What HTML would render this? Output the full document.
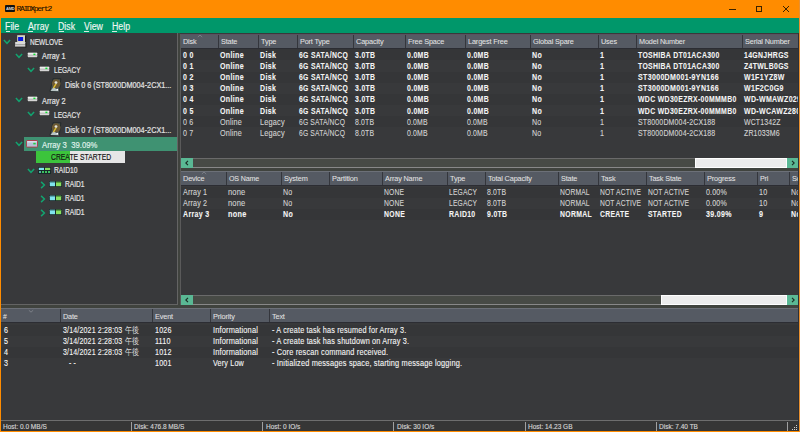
<!DOCTYPE html><html><head><meta charset="utf-8"><style>
*{margin:0;padding:0;box-sizing:border-box}
html,body{width:800px;height:432px;overflow:hidden;background:#ff8c00}
body{position:relative;font-family:"Liberation Sans",sans-serif;}
.a{position:absolute;white-space:nowrap}
.title{left:0;top:0;width:800px;height:18px;background:#ff8c00}
.menu{left:1px;top:18px;width:798px;height:15px;background:#00976a;color:#eef6f2;font-size:10px;-webkit-text-stroke:0.15px currentColor}
.menu span{position:absolute;top:3.4px;line-height:11px}
.menu u{text-decoration:underline;text-underline-offset:1px;text-decoration-thickness:1px}
.pan{background:#38393b}
.gap{background:#40433e}
.hdr{position:absolute;height:15px;background:#555a63;border-top:1px solid #6c7078;border-bottom:1px solid #2c2d33;color:#e2e2e2;font-size:7.5px;letter-spacing:-0.15px;-webkit-text-stroke:0.05px currentColor}
.hc{position:absolute;top:0;height:13px;line-height:13px;padding-left:1.6px;border-left:1px solid #34363c}
.t{position:absolute;font-size:9px;line-height:11px;color:#f4f4f4;white-space:nowrap;-webkit-text-stroke:0.12px currentColor;letter-spacing:0.2px;transform:scaleX(0.88);transform-origin:0 0}
.b{font-weight:bold;-webkit-text-stroke:0.1px currentColor;letter-spacing:0.45px;font-size:9.5px}
.g{color:#d2d2d2}
.tt{position:absolute;font-size:8.5px;line-height:14px;color:#f2f2f2;white-space:nowrap;-webkit-text-stroke:0.2px currentColor;transform:scaleX(0.87);transform-origin:0 0}
.sb{position:absolute;height:10px;background:#474a45;border-top:1px solid #6a6a6a;border-bottom:1px solid #888}
.btn{position:absolute;top:-1px;width:12px;height:10px;background:#5ab894}
.status{left:1px;top:420px;width:798px;height:11px;background:#363636;border-top:1px solid #6e6e6e;font-size:7px;color:#d4d4d4}
.status span{position:absolute;top:1px;line-height:10px;transform:scaleX(0.93);transform-origin:0 0;-webkit-text-stroke:0.15px currentColor}
.status i{position:absolute;top:1px;width:1px;height:9px;background:#a0a0a0}
</style></head><body>
<div class="a title">
<div class="a" style="left:5px;top:5px;width:10px;height:7px;background:#111;border-radius:1px"></div>
<div class="a" style="left:6px;top:6px;font:bold 4px/5px 'Liberation Sans',sans-serif;color:#ddd;letter-spacing:-0.2px">AMD</div>
<div class="a" style="left:16.5px;top:4.1px;font:8px/10px 'Liberation Mono',monospace;color:#1a1000;letter-spacing:-1.35px;-webkit-text-stroke:0.1px #1a1000">RAIDXpert2</div>
<div class="a" style="left:729px;top:9px;width:7px;height:1px;background:#3a2200"></div>
<div class="a" style="left:756px;top:6px;width:6px;height:6px;border:1px solid #3a2200"></div>
<svg class="a" style="left:782px;top:5px" width="8" height="8" viewBox="0 0 8 8"><path d="M1 1L7 7M7 1L1 7" stroke="#3a2200" stroke-width="1"/></svg>
</div>
<div class="a menu">
<span style="left:4.0px;transform:scaleX(0.88);transform-origin:0 0">File</span>
<div class="a" style="left:4.7px;top:12.6px;width:4px;height:1px;background:#d8ece2"></div>
<span style="left:26.5px;transform:scaleX(0.88);transform-origin:0 0">Array</span>
<div class="a" style="left:27.2px;top:12.6px;width:5px;height:1px;background:#d8ece2"></div>
<span style="left:56.8px;transform:scaleX(0.88);transform-origin:0 0">Disk</span>
<div class="a" style="left:57.5px;top:12.6px;width:5px;height:1px;background:#d8ece2"></div>
<span style="left:82.5px;transform:scaleX(0.88);transform-origin:0 0">View</span>
<div class="a" style="left:83.2px;top:12.6px;width:5px;height:1px;background:#d8ece2"></div>
<span style="left:110.5px;transform:scaleX(0.88);transform-origin:0 0">Help</span>
<div class="a" style="left:111.2px;top:12.6px;width:5px;height:1px;background:#d8ece2"></div>
</div>
<div class="a pan" style="left:1px;top:33px;width:798px;height:387px"></div>
<div class="a" style="left:177px;top:33px;width:1px;height:272px;background:#646464"></div>
<div class="a" style="left:1px;top:304px;width:177px;height:1px;background:#646464"></div>
<div class="a gap" style="left:178px;top:33px;width:2px;height:275px"></div>
<div class="a" style="left:180px;top:34px;width:1px;height:271px;background:#5a5a5a"></div>
<div class="a gap" style="left:1px;top:305px;width:798px;height:3px"></div>
<div class="a gap" style="left:181px;top:168px;width:618px;height:3px"></div>
<svg class="a" style="left:3px;top:38.5px" width="8" height="6" viewBox="0 0 8 6"><path d="M0.9 1.1L4 4.3L7.1 1.1" fill="none" stroke="#12a470" stroke-width="1.5"/></svg>
<svg class="a" style="left:14px;top:35px" width="13" height="13" viewBox="0 0 13 13"><rect x="3.2" y="0.2" width="8" height="6.8" fill="#d4d4c0"/><rect x="11.1" y="0.6" width="1.1" height="6.6" fill="#151515"/><rect x="4.1" y="2" width="5" height="4" fill="#0818e0"/><path d="M1.2 7H11.6L12 12H1Z" fill="#dadada"/><rect x="1" y="9.2" width="11" height="1" fill="#9a9a9a"/><rect x="11.4" y="7.5" width="1" height="5" fill="#151515"/><rect x="1" y="11.6" width="11" height="0.8" fill="#202020"/></svg>
<div class="tt" style="left:30px;top:35.0px;color:#e2e2e2;transform:scaleX(0.770)">NEWLOVE</div>
<svg class="a" style="left:15px;top:52.5px" width="8" height="6" viewBox="0 0 8 6"><path d="M0.9 1.1L4 4.3L7.1 1.1" fill="none" stroke="#12a470" stroke-width="1.5"/></svg>
<svg class="a" style="left:27px;top:52px" width="11" height="6" viewBox="0 0 11 6"><rect x="0.3" y="0.3" width="10.4" height="5.4" fill="#d6d6d6" stroke="#262626" stroke-width="0.6"/><rect x="0.8" y="0.8" width="9.4" height="1" fill="#f4f4f4"/><rect x="0.8" y="3" width="9.4" height="0.8" fill="#bcbcbc"/><rect x="6.4" y="1.6" width="2" height="1.5" fill="#10e030"/></svg>
<div class="tt" style="left:42px;top:49.0px;color:#e2e2e2;transform:scaleX(0.862)">Array 1</div>
<svg class="a" style="left:27px;top:66.5px" width="8" height="6" viewBox="0 0 8 6"><path d="M0.9 1.1L4 4.3L7.1 1.1" fill="none" stroke="#12a470" stroke-width="1.5"/></svg>
<svg class="a" style="left:39px;top:66px" width="11" height="6" viewBox="0 0 11 6"><rect x="0.3" y="0.3" width="10.4" height="5.4" fill="#d6d6d6" stroke="#262626" stroke-width="0.6"/><rect x="0.8" y="0.8" width="9.4" height="1" fill="#f4f4f4"/><rect x="0.8" y="3" width="9.4" height="0.8" fill="#bcbcbc"/><rect x="6.4" y="1.6" width="2" height="1.5" fill="#10e030"/></svg>
<div class="tt" style="left:54px;top:63.0px;color:#e2e2e2;transform:scaleX(0.770)">LEGACY</div>
<svg class="a" style="left:49px;top:78px" width="13" height="14" viewBox="0 0 13 14"><path d="M4 0.8H11.8L10.2 13.4H1Z" fill="#4a5252" stroke="#141c1c" stroke-width="0.6"/><path d="M1.5 13L4.5 9L10.2 13.2Z" fill="#b8c4c4"/><circle cx="7.2" cy="5.6" r="4.3" fill="#6e5a32"/><circle cx="7" cy="4.6" r="1.4" fill="#e4e2d8"/><path d="M7 5.8L4.4 10.2" stroke="#e0c030" stroke-width="1.3"/><circle cx="8.3" cy="11.6" r="0.9" fill="#fff"/></svg>
<div class="tt" style="left:65px;top:78.0px;color:#e2e2e2;transform:scaleX(0.856)">Disk 0 6 (ST8000DM004-2CX1...</div>
<svg class="a" style="left:15px;top:96.5px" width="8" height="6" viewBox="0 0 8 6"><path d="M0.9 1.1L4 4.3L7.1 1.1" fill="none" stroke="#12a470" stroke-width="1.5"/></svg>
<svg class="a" style="left:27px;top:96px" width="11" height="6" viewBox="0 0 11 6"><rect x="0.3" y="0.3" width="10.4" height="5.4" fill="#d6d6d6" stroke="#262626" stroke-width="0.6"/><rect x="0.8" y="0.8" width="9.4" height="1" fill="#f4f4f4"/><rect x="0.8" y="3" width="9.4" height="0.8" fill="#bcbcbc"/><rect x="6.4" y="1.6" width="2" height="1.5" fill="#10e030"/></svg>
<div class="tt" style="left:42px;top:93.5px;color:#e2e2e2;transform:scaleX(0.862)">Array 2</div>
<svg class="a" style="left:27px;top:110.5px" width="8" height="6" viewBox="0 0 8 6"><path d="M0.9 1.1L4 4.3L7.1 1.1" fill="none" stroke="#12a470" stroke-width="1.5"/></svg>
<svg class="a" style="left:39px;top:110px" width="11" height="6" viewBox="0 0 11 6"><rect x="0.3" y="0.3" width="10.4" height="5.4" fill="#d6d6d6" stroke="#262626" stroke-width="0.6"/><rect x="0.8" y="0.8" width="9.4" height="1" fill="#f4f4f4"/><rect x="0.8" y="3" width="9.4" height="0.8" fill="#bcbcbc"/><rect x="6.4" y="1.6" width="2" height="1.5" fill="#10e030"/></svg>
<div class="tt" style="left:54px;top:107.5px;color:#e2e2e2;transform:scaleX(0.770)">LEGACY</div>
<svg class="a" style="left:49px;top:122px" width="13" height="14" viewBox="0 0 13 14"><path d="M4 0.8H11.8L10.2 13.4H1Z" fill="#4a5252" stroke="#141c1c" stroke-width="0.6"/><path d="M1.5 13L4.5 9L10.2 13.2Z" fill="#b8c4c4"/><circle cx="7.2" cy="5.6" r="4.3" fill="#6e5a32"/><circle cx="7" cy="4.6" r="1.4" fill="#e4e2d8"/><path d="M7 5.8L4.4 10.2" stroke="#e0c030" stroke-width="1.3"/><circle cx="8.3" cy="11.6" r="0.9" fill="#fff"/></svg>
<div class="tt" style="left:65px;top:123.0px;color:#e2e2e2;transform:scaleX(0.856)">Disk 0 7 (ST8000DM004-2CX1...</div>
<div class="a" style="left:24px;top:137px;width:153px;height:14px;background:#3f9272"></div>
<svg class="a" style="left:15px;top:140.5px" width="8" height="6" viewBox="0 0 8 6"><path d="M0.9 1.1L4 4.3L7.1 1.1" fill="none" stroke="#12a470" stroke-width="1.5"/></svg>
<svg class="a" style="left:26px;top:140px" width="12" height="8" viewBox="0 0 12 8"><rect x="0.5" y="0.5" width="11" height="6.6" rx="0.6" fill="#b4c2d6" stroke="#b03848" stroke-width="0.9"/><rect x="1.3" y="1.2" width="9.4" height="1.2" fill="#e0e8f0"/><rect x="7.3" y="2.8" width="2.4" height="1.6" fill="#20d040"/></svg>
<div class="tt" style="left:42px;top:137.9px;color:#dff0e8;transform:scaleX(0.909)">Array 3&nbsp; 39.09%</div>
<div class="a" style="left:36px;top:151px;width:89px;height:12px;background:#e6e6e6;overflow:hidden"><div class="a" style="left:0;top:0;width:34px;height:12px;background:#3cc43c"></div><div class="a" style="left:14.5px;top:0;font-size:8.5px;line-height:12.5px;color:#111;transform:scaleX(0.80);transform-origin:0 0;-webkit-text-stroke:0.15px #111">CREATE STARTED</div></div>
<svg class="a" style="left:27px;top:167.5px" width="8" height="6" viewBox="0 0 8 6"><path d="M0.9 1.1L4 4.3L7.1 1.1" fill="none" stroke="#12a470" stroke-width="1.5"/></svg>
<svg class="a" style="left:38px;top:167px" width="13" height="7" viewBox="0 0 13 7"><rect x="0" y="0" width="13" height="7" fill="#18282a"/><rect x="0.8" y="0.8" width="5.2" height="2.2" fill="#80e4ee"/><rect x="7" y="0.8" width="5.2" height="2.2" fill="#88e060"/><rect x="1" y="4" width="2" height="2" fill="#50b0a0"/><rect x="4" y="4" width="2" height="2" fill="#40c060"/><rect x="7" y="4" width="2" height="2" fill="#40c060"/><rect x="10" y="4" width="2" height="2" fill="#40c060"/></svg>
<div class="tt" style="left:53.6px;top:163.0px;color:#e2e2e2;transform:scaleX(0.789)">RAID10</div>
<svg class="a" style="left:40px;top:180.5px" width="6" height="8" viewBox="0 0 6 8"><path d="M1.1 0.9L4.4 4L1.1 7.1" fill="none" stroke="#12a470" stroke-width="1.5"/></svg>
<svg class="a" style="left:49px;top:181px" width="13" height="6" viewBox="0 0 13 6"><rect x="0" y="0" width="13" height="6" fill="#18282a"/><rect x="0.8" y="0.8" width="5.2" height="4.4" fill="#80e4ee"/><rect x="0.8" y="0.8" width="5.2" height="1.2" fill="#5aa8b0"/><rect x="7" y="0.8" width="5.2" height="4.4" fill="#88e060"/><rect x="7" y="0.8" width="5.2" height="1.2" fill="#58a040"/></svg>
<div class="tt" style="left:65.3px;top:177.0px;color:#e2e2e2;transform:scaleX(0.781)">RAID1</div>
<svg class="a" style="left:40px;top:194.5px" width="6" height="8" viewBox="0 0 6 8"><path d="M1.1 0.9L4.4 4L1.1 7.1" fill="none" stroke="#12a470" stroke-width="1.5"/></svg>
<svg class="a" style="left:49px;top:195px" width="13" height="6" viewBox="0 0 13 6"><rect x="0" y="0" width="13" height="6" fill="#18282a"/><rect x="0.8" y="0.8" width="5.2" height="4.4" fill="#80e4ee"/><rect x="0.8" y="0.8" width="5.2" height="1.2" fill="#5aa8b0"/><rect x="7" y="0.8" width="5.2" height="4.4" fill="#88e060"/><rect x="7" y="0.8" width="5.2" height="1.2" fill="#58a040"/></svg>
<div class="tt" style="left:65.3px;top:191.0px;color:#e2e2e2;transform:scaleX(0.781)">RAID1</div>
<svg class="a" style="left:40px;top:208.5px" width="6" height="8" viewBox="0 0 6 8"><path d="M1.1 0.9L4.4 4L1.1 7.1" fill="none" stroke="#12a470" stroke-width="1.5"/></svg>
<svg class="a" style="left:49px;top:209px" width="13" height="6" viewBox="0 0 13 6"><rect x="0" y="0" width="13" height="6" fill="#18282a"/><rect x="0.8" y="0.8" width="5.2" height="4.4" fill="#80e4ee"/><rect x="0.8" y="0.8" width="5.2" height="1.2" fill="#5aa8b0"/><rect x="7" y="0.8" width="5.2" height="4.4" fill="#88e060"/><rect x="7" y="0.8" width="5.2" height="1.2" fill="#58a040"/></svg>
<div class="tt" style="left:65.3px;top:205.0px;color:#e2e2e2;transform:scaleX(0.781)">RAID1</div>
<div class="hdr" style="left:181px;top:34px;width:618px;border-top-color:#5a5260;">
<div class="hc" style="left:0px;width:37px;border-left:none;line-height:13px"><span style="display:inline-block;transform:scaleX(0.963);transform-origin:0 0">Disk</span></div>
<div class="hc" style="left:37px;width:40px;line-height:13px"><span style="display:inline-block;transform:scaleX(0.971);transform-origin:0 0">State</span></div>
<div class="hc" style="left:77px;width:39px;line-height:13px"><span style="display:inline-block;transform:scaleX(0.973);transform-origin:0 0">Type</span></div>
<div class="hc" style="left:116px;width:56px;line-height:13px"><span style="display:inline-block;transform:scaleX(0.964);transform-origin:0 0">Port Type</span></div>
<div class="hc" style="left:172px;width:52px;line-height:13px"><span style="display:inline-block;transform:scaleX(0.981);transform-origin:0 0">Capacity</span></div>
<div class="hc" style="left:224px;width:60px;line-height:13px"><span style="display:inline-block;transform:scaleX(0.970);transform-origin:0 0">Free Space</span></div>
<div class="hc" style="left:284px;width:65px;line-height:13px"><span style="display:inline-block;transform:scaleX(0.975);transform-origin:0 0">Largest Free</span></div>
<div class="hc" style="left:349px;width:68px;line-height:13px"><span style="display:inline-block;transform:scaleX(0.970);transform-origin:0 0">Global Spare</span></div>
<div class="hc" style="left:417px;width:38px;line-height:13px"><span style="display:inline-block;transform:scaleX(0.968);transform-origin:0 0">Uses</span></div>
<div class="hc" style="left:455px;width:106px;line-height:13px"><span style="display:inline-block;transform:scaleX(0.972);transform-origin:0 0">Model Number</span></div>
<div class="hc" style="left:561px;width:118px;line-height:13px"><span style="display:inline-block;transform:scaleX(0.974);transform-origin:0 0">Serial Number</span></div>
</div>
<svg class="a" style="left:197px;top:34px" width="6" height="4" viewBox="0 0 6 4"><path d="M0.8 3L3 1L5.2 3" fill="none" stroke="#80838b" stroke-width="0.9"/></svg>
<div class="a" style="left:181px;top:49.20px;width:618px;height:11.17px;background:#353638"></div>
<div class="t b" style="left:182.8px;top:48.80px;transform:scaleX(0.736)">0 0</div>
<div class="t b" style="left:219.8px;top:48.80px;transform:scaleX(0.742)">Online</div>
<div class="t b" style="left:259.8px;top:48.80px;transform:scaleX(0.739)">Disk</div>
<div class="t b" style="left:298.8px;top:48.80px;transform:scaleX(0.717)">6G SATA/NCQ</div>
<div class="t b" style="left:354.8px;top:48.80px;transform:scaleX(0.726)">3.0TB</div>
<div class="t b" style="left:406.8px;top:48.80px;transform:scaleX(0.729)">0.0MB</div>
<div class="t b" style="left:466.8px;top:48.80px;transform:scaleX(0.729)">0.0MB</div>
<div class="t b" style="left:531.8px;top:48.80px;transform:scaleX(0.741)">No</div>
<div class="t b" style="left:599.8px;top:48.80px;transform:scaleX(0.760)">1</div>
<div class="t b" style="left:637.8px;top:48.80px;transform:scaleX(0.725)">TOSHIBA DT01ACA300</div>
<div class="t b" style="left:743.8px;top:48.80px;transform:scaleX(0.727)">14GNJHRGS</div>
<div class="a" style="left:181px;top:60.37px;width:618px;height:11.17px;background:#38393b"></div>
<div class="t b" style="left:182.8px;top:59.97px;transform:scaleX(0.736)">0 1</div>
<div class="t b" style="left:219.8px;top:59.97px;transform:scaleX(0.742)">Online</div>
<div class="t b" style="left:259.8px;top:59.97px;transform:scaleX(0.739)">Disk</div>
<div class="t b" style="left:298.8px;top:59.97px;transform:scaleX(0.717)">6G SATA/NCQ</div>
<div class="t b" style="left:354.8px;top:59.97px;transform:scaleX(0.726)">3.0TB</div>
<div class="t b" style="left:406.8px;top:59.97px;transform:scaleX(0.729)">0.0MB</div>
<div class="t b" style="left:466.8px;top:59.97px;transform:scaleX(0.729)">0.0MB</div>
<div class="t b" style="left:531.8px;top:59.97px;transform:scaleX(0.741)">No</div>
<div class="t b" style="left:599.8px;top:59.97px;transform:scaleX(0.760)">1</div>
<div class="t b" style="left:637.8px;top:59.97px;transform:scaleX(0.725)">TOSHIBA DT01ACA300</div>
<div class="t b" style="left:743.8px;top:59.97px;transform:scaleX(0.727)">Z4TWLB0GS</div>
<div class="a" style="left:181px;top:71.54px;width:618px;height:11.17px;background:#353638"></div>
<div class="t b" style="left:182.8px;top:71.14px;transform:scaleX(0.736)">0 2</div>
<div class="t b" style="left:219.8px;top:71.14px;transform:scaleX(0.742)">Online</div>
<div class="t b" style="left:259.8px;top:71.14px;transform:scaleX(0.739)">Disk</div>
<div class="t b" style="left:298.8px;top:71.14px;transform:scaleX(0.717)">6G SATA/NCQ</div>
<div class="t b" style="left:354.8px;top:71.14px;transform:scaleX(0.726)">3.0TB</div>
<div class="t b" style="left:406.8px;top:71.14px;transform:scaleX(0.729)">0.0MB</div>
<div class="t b" style="left:466.8px;top:71.14px;transform:scaleX(0.729)">0.0MB</div>
<div class="t b" style="left:531.8px;top:71.14px;transform:scaleX(0.741)">No</div>
<div class="t b" style="left:599.8px;top:71.14px;transform:scaleX(0.760)">1</div>
<div class="t b" style="left:637.8px;top:71.14px;transform:scaleX(0.740)">ST3000DM001-9YN166</div>
<div class="t b" style="left:743.8px;top:71.14px;transform:scaleX(0.734)">W1F1YZ8W</div>
<div class="a" style="left:181px;top:82.71px;width:618px;height:11.17px;background:#38393b"></div>
<div class="t b" style="left:182.8px;top:82.31px;transform:scaleX(0.736)">0 3</div>
<div class="t b" style="left:219.8px;top:82.31px;transform:scaleX(0.742)">Online</div>
<div class="t b" style="left:259.8px;top:82.31px;transform:scaleX(0.739)">Disk</div>
<div class="t b" style="left:298.8px;top:82.31px;transform:scaleX(0.717)">6G SATA/NCQ</div>
<div class="t b" style="left:354.8px;top:82.31px;transform:scaleX(0.726)">3.0TB</div>
<div class="t b" style="left:406.8px;top:82.31px;transform:scaleX(0.729)">0.0MB</div>
<div class="t b" style="left:466.8px;top:82.31px;transform:scaleX(0.729)">0.0MB</div>
<div class="t b" style="left:531.8px;top:82.31px;transform:scaleX(0.741)">No</div>
<div class="t b" style="left:599.8px;top:82.31px;transform:scaleX(0.760)">1</div>
<div class="t b" style="left:637.8px;top:82.31px;transform:scaleX(0.740)">ST3000DM001-9YN166</div>
<div class="t b" style="left:743.8px;top:82.31px;transform:scaleX(0.738)">W1F2C0G9</div>
<div class="a" style="left:181px;top:93.88px;width:618px;height:11.17px;background:#353638"></div>
<div class="t b" style="left:182.8px;top:93.48px;transform:scaleX(0.736)">0 4</div>
<div class="t b" style="left:219.8px;top:93.48px;transform:scaleX(0.742)">Online</div>
<div class="t b" style="left:259.8px;top:93.48px;transform:scaleX(0.739)">Disk</div>
<div class="t b" style="left:298.8px;top:93.48px;transform:scaleX(0.717)">6G SATA/NCQ</div>
<div class="t b" style="left:354.8px;top:93.48px;transform:scaleX(0.726)">3.0TB</div>
<div class="t b" style="left:406.8px;top:93.48px;transform:scaleX(0.729)">0.0MB</div>
<div class="t b" style="left:466.8px;top:93.48px;transform:scaleX(0.729)">0.0MB</div>
<div class="t b" style="left:531.8px;top:93.48px;transform:scaleX(0.741)">No</div>
<div class="t b" style="left:599.8px;top:93.48px;transform:scaleX(0.760)">1</div>
<div class="t b" style="left:637.8px;top:93.48px;transform:scaleX(0.727)">WDC WD30EZRX-00MMMB0</div>
<div class="t b" style="left:743.8px;top:93.48px;transform:scaleX(0.737)">WD-WMAWZ0290000</div>
<div class="a" style="left:181px;top:105.05px;width:618px;height:11.17px;background:#38393b"></div>
<div class="t b" style="left:182.8px;top:104.65px;transform:scaleX(0.736)">0 5</div>
<div class="t b" style="left:219.8px;top:104.65px;transform:scaleX(0.742)">Online</div>
<div class="t b" style="left:259.8px;top:104.65px;transform:scaleX(0.739)">Disk</div>
<div class="t b" style="left:298.8px;top:104.65px;transform:scaleX(0.717)">6G SATA/NCQ</div>
<div class="t b" style="left:354.8px;top:104.65px;transform:scaleX(0.726)">3.0TB</div>
<div class="t b" style="left:406.8px;top:104.65px;transform:scaleX(0.729)">0.0MB</div>
<div class="t b" style="left:466.8px;top:104.65px;transform:scaleX(0.729)">0.0MB</div>
<div class="t b" style="left:531.8px;top:104.65px;transform:scaleX(0.741)">No</div>
<div class="t b" style="left:599.8px;top:104.65px;transform:scaleX(0.760)">1</div>
<div class="t b" style="left:637.8px;top:104.65px;transform:scaleX(0.727)">WDC WD30EZRX-00MMMB0</div>
<div class="t b" style="left:743.8px;top:104.65px;transform:scaleX(0.736)">WD-WCAWZ2800000</div>
<div class="a" style="left:181px;top:116.22px;width:618px;height:11.17px;background:#353638"></div>
<div class="t g" style="left:182.8px;top:116.82px;transform:scaleX(0.786)">0 6</div>
<div class="t g" style="left:219.8px;top:116.82px;transform:scaleX(0.806)">Online</div>
<div class="t g" style="left:259.8px;top:116.82px;transform:scaleX(0.819)">Legacy</div>
<div class="t g" style="left:298.8px;top:116.82px;transform:scaleX(0.750)">6G SATA/NCQ</div>
<div class="t g" style="left:354.8px;top:116.82px;transform:scaleX(0.766)">8.0TB</div>
<div class="t g" style="left:406.8px;top:116.82px;transform:scaleX(0.767)">0.0MB</div>
<div class="t g" style="left:466.8px;top:116.82px;transform:scaleX(0.767)">0.0MB</div>
<div class="t g" style="left:531.8px;top:116.82px;transform:scaleX(0.786)">No</div>
<div class="t g" style="left:599.8px;top:116.82px;transform:scaleX(0.798)">1</div>
<div class="t g" style="left:637.8px;top:116.82px;transform:scaleX(0.776)">ST8000DM004-2CX188</div>
<div class="t g" style="left:743.8px;top:116.82px;transform:scaleX(0.769)">WCT1342Z</div>
<div class="a" style="left:181px;top:127.39px;width:618px;height:11.17px;background:#38393b"></div>
<div class="t g" style="left:182.8px;top:127.99px;transform:scaleX(0.786)">0 7</div>
<div class="t g" style="left:219.8px;top:127.99px;transform:scaleX(0.806)">Online</div>
<div class="t g" style="left:259.8px;top:127.99px;transform:scaleX(0.819)">Legacy</div>
<div class="t g" style="left:298.8px;top:127.99px;transform:scaleX(0.750)">6G SATA/NCQ</div>
<div class="t g" style="left:354.8px;top:127.99px;transform:scaleX(0.766)">8.0TB</div>
<div class="t g" style="left:406.8px;top:127.99px;transform:scaleX(0.767)">0.0MB</div>
<div class="t g" style="left:466.8px;top:127.99px;transform:scaleX(0.767)">0.0MB</div>
<div class="t g" style="left:531.8px;top:127.99px;transform:scaleX(0.786)">No</div>
<div class="t g" style="left:599.8px;top:127.99px;transform:scaleX(0.798)">1</div>
<div class="t g" style="left:637.8px;top:127.99px;transform:scaleX(0.776)">ST8000DM004-2CX188</div>
<div class="t g" style="left:743.8px;top:127.99px;transform:scaleX(0.776)">ZR1033M6</div>
<div class="sb" style="left:181px;top:158px;width:618px"><div class="btn" style="left:0"><svg class="a" style="left:3px;top:1px" width="6" height="8" viewBox="0 0 6 8"><path d="M4 1.8L1.8 4L4 6.2" fill="none" stroke="#1b2b24" stroke-width="1.1"/></svg></div><div class="a" style="left:514px;top:-1px;width:92px;height:10px;background:#ececec;border:1px solid #fff"></div><div class="btn" style="left:606px"><svg class="a" style="left:3px;top:1px" width="6" height="8" viewBox="0 0 6 8"><path d="M2 1.8L4.2 4L2 6.2" fill="none" stroke="#1b2b24" stroke-width="1.1"/></svg></div></div>
<div class="hdr" style="left:181px;top:171px;width:618px;">
<div class="hc" style="left:0px;width:45px;border-left:none;line-height:13px"><span style="display:inline-block;transform:scaleX(0.976);transform-origin:0 0">Device</span></div>
<div class="hc" style="left:45px;width:55px;line-height:13px"><span style="display:inline-block;transform:scaleX(0.944);transform-origin:0 0">OS Name</span></div>
<div class="hc" style="left:100px;width:48px;line-height:13px"><span style="display:inline-block;transform:scaleX(0.980);transform-origin:0 0">System</span></div>
<div class="hc" style="left:148px;width:53px;line-height:13px"><span style="display:inline-block;transform:scaleX(0.982);transform-origin:0 0">Partition</span></div>
<div class="hc" style="left:201px;width:65px;line-height:13px"><span style="display:inline-block;transform:scaleX(0.969);transform-origin:0 0">Array Name</span></div>
<div class="hc" style="left:266px;width:38px;line-height:13px"><span style="display:inline-block;transform:scaleX(0.973);transform-origin:0 0">Type</span></div>
<div class="hc" style="left:304px;width:73px;line-height:13px"><span style="display:inline-block;transform:scaleX(0.975);transform-origin:0 0">Total Capacity</span></div>
<div class="hc" style="left:377px;width:40px;line-height:13px"><span style="display:inline-block;transform:scaleX(0.971);transform-origin:0 0">State</span></div>
<div class="hc" style="left:417px;width:48px;line-height:13px"><span style="display:inline-block;transform:scaleX(0.972);transform-origin:0 0">Task</span></div>
<div class="hc" style="left:465px;width:58px;line-height:13px"><span style="display:inline-block;transform:scaleX(0.967);transform-origin:0 0">Task State</span></div>
<div class="hc" style="left:523px;width:53px;line-height:13px"><span style="display:inline-block;transform:scaleX(0.983);transform-origin:0 0">Progress</span></div>
<div class="hc" style="left:576px;width:32px;line-height:13px"><span style="display:inline-block;transform:scaleX(0.945);transform-origin:0 0">Pri</span></div>
<div class="hc" style="left:608px;width:71px;line-height:13px"><span style="display:inline-block;transform:scaleX(0.984);transform-origin:0 0">Schedule</span></div>
</div>
<svg class="a" style="left:201px;top:171px" width="6" height="4" viewBox="0 0 6 4"><path d="M0.8 3L3 1L5.2 3" fill="none" stroke="#80838b" stroke-width="0.9"/></svg>
<div class="a" style="left:181px;top:187.00px;width:618px;height:11px;background:#353638"></div>
<div class="t g" style="left:183px;top:187.00px;transform:scaleX(0.798)">Array 1</div>
<div class="t g" style="left:228px;top:187.00px;transform:scaleX(0.837)">none</div>
<div class="t g" style="left:283px;top:187.00px;transform:scaleX(0.786)">No</div>
<div class="t g" style="left:384px;top:187.00px;transform:scaleX(0.747)">NONE</div>
<div class="t g" style="left:449px;top:187.00px;transform:scaleX(0.746)">LEGACY</div>
<div class="t g" style="left:487px;top:187.00px;transform:scaleX(0.766)">8.0TB</div>
<div class="t g" style="left:560px;top:187.00px;transform:scaleX(0.747)">NORMAL</div>
<div class="t g" style="left:600px;top:187.00px;transform:scaleX(0.744)">NOT ACTIVE</div>
<div class="t g" style="left:648px;top:187.00px;transform:scaleX(0.744)">NOT ACTIVE</div>
<div class="t g" style="left:706px;top:187.00px;transform:scaleX(0.787)">0.00%</div>
<div class="t g" style="left:759px;top:187.00px;transform:scaleX(0.798)">10</div>
<div class="t g" style="left:791px;top:187.00px;transform:scaleX(0.786)">No</div>
<div class="a" style="left:181px;top:198.00px;width:618px;height:11px;background:#38393b"></div>
<div class="t g" style="left:183px;top:198.00px;transform:scaleX(0.798)">Array 2</div>
<div class="t g" style="left:228px;top:198.00px;transform:scaleX(0.837)">none</div>
<div class="t g" style="left:283px;top:198.00px;transform:scaleX(0.786)">No</div>
<div class="t g" style="left:384px;top:198.00px;transform:scaleX(0.747)">NONE</div>
<div class="t g" style="left:449px;top:198.00px;transform:scaleX(0.746)">LEGACY</div>
<div class="t g" style="left:487px;top:198.00px;transform:scaleX(0.766)">8.0TB</div>
<div class="t g" style="left:560px;top:198.00px;transform:scaleX(0.747)">NORMAL</div>
<div class="t g" style="left:600px;top:198.00px;transform:scaleX(0.744)">NOT ACTIVE</div>
<div class="t g" style="left:648px;top:198.00px;transform:scaleX(0.744)">NOT ACTIVE</div>
<div class="t g" style="left:706px;top:198.00px;transform:scaleX(0.787)">0.00%</div>
<div class="t g" style="left:759px;top:198.00px;transform:scaleX(0.798)">10</div>
<div class="t g" style="left:791px;top:198.00px;transform:scaleX(0.786)">No</div>
<div class="a" style="left:181px;top:209.00px;width:618px;height:11px;background:#353638"></div>
<div class="t b" style="left:183px;top:208.00px;transform:scaleX(0.736)">Array 3</div>
<div class="t b" style="left:228px;top:208.00px;transform:scaleX(0.764)">none</div>
<div class="t b" style="left:283px;top:208.00px;transform:scaleX(0.741)">No</div>
<div class="t b" style="left:384px;top:208.00px;transform:scaleX(0.720)">NONE</div>
<div class="t b" style="left:449px;top:208.00px;transform:scaleX(0.727)">RAID10</div>
<div class="t b" style="left:487px;top:208.00px;transform:scaleX(0.726)">9.0TB</div>
<div class="t b" style="left:560px;top:208.00px;transform:scaleX(0.721)">NORMAL</div>
<div class="t b" style="left:600px;top:208.00px;transform:scaleX(0.718)">CREATE</div>
<div class="t b" style="left:648px;top:208.00px;transform:scaleX(0.717)">STARTED</div>
<div class="t b" style="left:706px;top:208.00px;transform:scaleX(0.739)">39.09%</div>
<div class="t b" style="left:759px;top:208.00px;transform:scaleX(0.760)">9</div>
<div class="t b" style="left:791px;top:208.00px;transform:scaleX(0.741)">No</div>
<div class="sb" style="left:181px;top:295px;width:618px"><div class="btn" style="left:0"><svg class="a" style="left:3px;top:1px" width="6" height="8" viewBox="0 0 6 8"><path d="M4 1.8L1.8 4L4 6.2" fill="none" stroke="#1b2b24" stroke-width="1.1"/></svg></div><div class="a" style="left:480px;top:-1px;width:126px;height:10px;background:#ececec;border:1px solid #fff"></div><div class="btn" style="left:606px"><svg class="a" style="left:3px;top:1px" width="6" height="8" viewBox="0 0 6 8"><path d="M2 1.8L4.2 4L2 6.2" fill="none" stroke="#1b2b24" stroke-width="1.1"/></svg></div></div>
<div class="hdr" style="left:1px;top:308px;width:798px;">
<div class="hc" style="left:0px;width:59px;border-left:none;line-height:15.4px"><span style="display:inline-block;transform:scaleX(0.900);transform-origin:0 0">#</span></div>
<div class="hc" style="left:59px;width:92px;line-height:15.4px"><span style="display:inline-block;transform:scaleX(0.966);transform-origin:0 0">Date</span></div>
<div class="hc" style="left:151px;width:58px;line-height:15.4px"><span style="display:inline-block;transform:scaleX(0.974);transform-origin:0 0">Event</span></div>
<div class="hc" style="left:209px;width:59px;line-height:15.4px"><span style="display:inline-block;transform:scaleX(0.979);transform-origin:0 0">Priority</span></div>
<div class="hc" style="left:268px;width:591px;line-height:15.4px"><span style="display:inline-block;transform:scaleX(0.969);transform-origin:0 0">Text</span></div>
</div>
<svg class="a" style="left:28px;top:309px" width="6" height="4" viewBox="0 0 6 4"><path d="M0.8 1.2L3 3.2L5.2 1.2" fill="none" stroke="#80838b" stroke-width="0.9"/></svg>
<div class="a" style="left:1px;top:324.50px;width:798px;height:11.2px;background:#353638"></div>
<div class="t " style="left:3.8px;top:324.60px;transform:scaleX(0.798)">6</div>
<div class="t " style="left:62.8px;top:324.60px;transform:scaleX(0.782)">3/14/2021 2:28:03 <span style="font-size:9px;-webkit-text-stroke:0;color:#d8d8d8">午後</span></div>
<div class="t " style="left:154.8px;top:324.60px;transform:scaleX(0.798)">1026</div>
<div class="t " style="left:212.8px;top:324.60px;transform:scaleX(0.824)">Informational</div>
<div class="t " style="left:271.8px;top:324.60px;transform:scaleX(0.809)">- A create task has resumed for Array 3.</div>
<div class="a" style="left:1px;top:335.70px;width:798px;height:11.2px;background:#38393b"></div>
<div class="t " style="left:3.8px;top:335.80px;transform:scaleX(0.798)">5</div>
<div class="t " style="left:62.8px;top:335.80px;transform:scaleX(0.782)">3/14/2021 2:28:03 <span style="font-size:9px;-webkit-text-stroke:0;color:#d8d8d8">午後</span></div>
<div class="t " style="left:154.8px;top:335.80px;transform:scaleX(0.798)">1110</div>
<div class="t " style="left:212.8px;top:335.80px;transform:scaleX(0.824)">Informational</div>
<div class="t " style="left:271.8px;top:335.80px;transform:scaleX(0.811)">- A create task has shutdown on Array 3.</div>
<div class="a" style="left:1px;top:346.90px;width:798px;height:11.2px;background:#353638"></div>
<div class="t " style="left:3.8px;top:347.00px;transform:scaleX(0.798)">4</div>
<div class="t " style="left:62.8px;top:347.00px;transform:scaleX(0.782)">3/14/2021 2:28:03 <span style="font-size:9px;-webkit-text-stroke:0;color:#d8d8d8">午後</span></div>
<div class="t " style="left:154.8px;top:347.00px;transform:scaleX(0.798)">1012</div>
<div class="t " style="left:212.8px;top:347.00px;transform:scaleX(0.824)">Informational</div>
<div class="t " style="left:271.8px;top:347.00px;transform:scaleX(0.820)">- Core rescan command received.</div>
<div class="a" style="left:1px;top:358.10px;width:798px;height:11.2px;background:#38393b"></div>
<div class="t " style="left:3.8px;top:358.20px;transform:scaleX(0.798)">3</div>
<div class="t " style="left:62.8px;top:358.20px;transform:scaleX(0.744)">&nbsp;&nbsp;&nbsp;- -</div>
<div class="t " style="left:154.8px;top:358.20px;transform:scaleX(0.798)">1001</div>
<div class="t " style="left:212.8px;top:358.20px;transform:scaleX(0.802)">Very Low</div>
<div class="t " style="left:271.8px;top:358.20px;transform:scaleX(0.821)">- Initialized messages space, starting message logging.</div>
<div class="a status">
<span style="left:2.2px">Host: 0.0 MB/S</span>
<i style="left:130px"></i>
<span style="left:133.4px">Disk: 476.8 MB/S</span>
<i style="left:261px"></i>
<span style="left:264.6px">Host: 0 IO/s</span>
<i style="left:392px"></i>
<span style="left:395.8px">Disk: 30 IO/s</span>
<i style="left:524px"></i>
<span style="left:527.0px">Host: 14.23 GB</span>
<i style="left:655px"></i>
<span style="left:658.2px">Disk: 7.40 TB</span>
<i style="left:786px"></i>
</div>
<div class="a" style="left:799px;top:0;width:1px;height:432px;background:#e89030"></div>
<div class="a" style="left:798px;top:33px;width:1px;height:398px;background:#2c3036"></div>
<div class="a" style="left:796px;top:425px;width:1px;height:1px;background:#d0d0d0"></div>
<div class="a" style="left:794px;top:427px;width:1px;height:1px;background:#d0d0d0"></div>
<div class="a" style="left:796px;top:427px;width:1px;height:1px;background:#d0d0d0"></div>
<div class="a" style="left:792px;top:429px;width:1px;height:1px;background:#d0d0d0"></div>
<div class="a" style="left:794px;top:429px;width:1px;height:1px;background:#d0d0d0"></div>
<div class="a" style="left:796px;top:429px;width:1px;height:1px;background:#d0d0d0"></div>
</body></html>
